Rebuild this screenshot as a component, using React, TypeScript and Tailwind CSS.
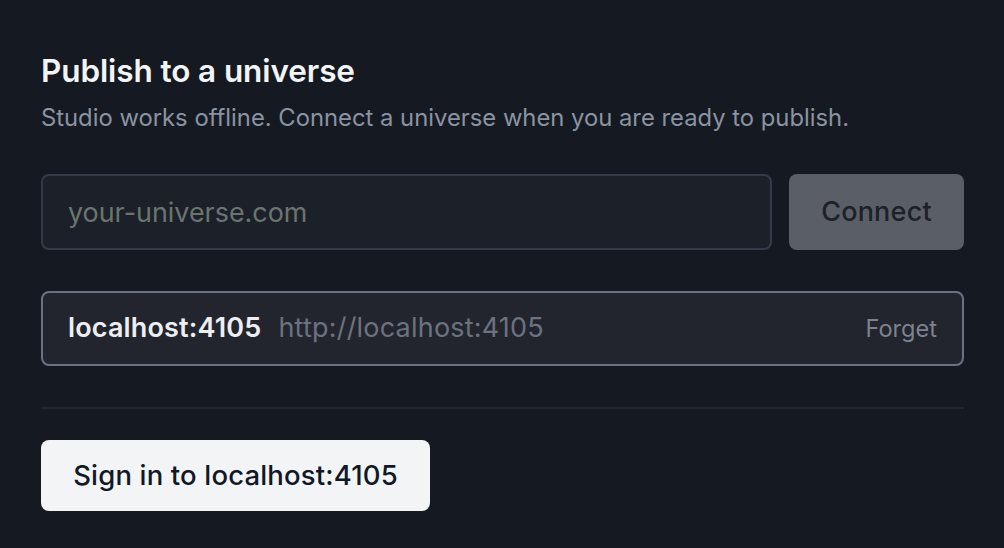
export default function App() {
  return (
    <div
      className="min-h-[548px] w-full bg-[#151a22] px-[41px] pt-[53px] pb-[36px] pr-[40px]"
      style={{ fontFamily: "Inter, 'Noto Sans', sans-serif" }}
    >
      <h1 className="text-[31.5px] leading-[36px] font-semibold tracking-[-0.1px] text-[#f3f4f6]">
        Publish to a universe
      </h1>
      <p className="mt-[15px] text-[23.8px] leading-[28px] text-[#8b93a1]">
        Studio works offline. Connect a universe when you are ready to publish.
      </p>

      <div className="mt-[42px] flex gap-[17px]">
        <input
          type="text"
          placeholder="your-universe.com"
          className="h-[76px] min-w-0 flex-1 rounded-[8px] border-2 border-[#343a48] bg-[#1b2029] px-[25px] text-[26.9px] text-[#e5e7eb] outline-none placeholder:text-[#6b756f]"
        />
        <button className="h-[76px] w-[175px] shrink-0 rounded-[8px] bg-[#5a5e66] text-[27px] font-medium tracking-[0.2px] text-[#1c2129]">
          Connect
        </button>
      </div>

      <div className="mt-[41px] flex h-[75px] items-center rounded-[8px] border-2 border-[#6b7180] bg-[#22252d] px-[25px]">
        <span className="text-[27px] font-semibold tracking-[0.15px] text-[#eceef1]">localhost:4105</span>
        <span className="ml-[17px] text-[27px] tracking-[0.2px] text-[#6b7280]">http://localhost:4105</span>
        <button className="ml-auto text-[23.6px] text-[#7d838d]">Forget</button>
      </div>

      <div className="mt-[41px] h-[2px] bg-[#212833]" />

      <button className="mt-[31px] h-[71px] w-[389px] rounded-[8px] bg-[#f3f4f6] text-[27.5px] font-medium tracking-[0.15px] text-[#111827]">
        Sign in to localhost:4105
      </button>
    </div>
  );
}
